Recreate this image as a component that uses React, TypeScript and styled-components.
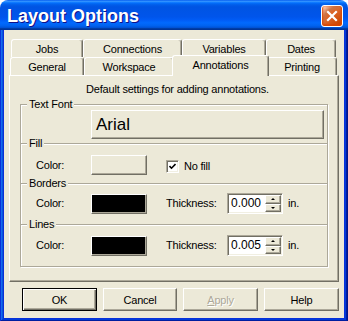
import styled, { createGlobalStyle, css } from "styled-components";

const GlobalStyle = createGlobalStyle`
  html, body {
    margin: 0;
    padding: 0;
    background: #ffffff;
  }
  body {
    font-family: "Liberation Sans", Arial, sans-serif;
    font-size: 11px;
    letter-spacing: -0.2px;
    color: #000;
  }
`;

const Window = styled.div`
  width: 348px;
  height: 321px;
  display: flex;
  flex-direction: column;
  border-radius: 8px 8px 0 0;
  overflow: hidden;
`;

const TitleBar = styled.div`
  height: 30px;
  flex-shrink: 0;
  display: flex;
  align-items: flex-start;
  justify-content: space-between;
  background: linear-gradient(
    180deg,
    #0058ee 0%,
    #3593ff 4%,
    #288eff 6%,
    #127dff 8%,
    #036ffc 10%,
    #0262ee 14%,
    #0057e5 20%,
    #0054e3 24%,
    #0055eb 56%,
    #005bf5 66%,
    #026afe 76%,
    #0062ef 86%,
    #0052d6 92%,
    #0040ab 94%,
    #003092 100%
  );
`;

const TitleText = styled.span`
  padding: 6px 0 0 7px;
  font-family: "Liberation Sans", Arial, sans-serif;
  font-size: 18px;
  font-weight: 700;
  letter-spacing: 0;
  line-height: 20px;
  color: #fff;
  text-shadow: 1px 1px #0f1089;
`;

const CloseButton = styled.div`
  width: 22px;
  height: 22px;
  margin: 5px 5px 0 0;
  box-sizing: border-box;
  border: 1px solid #fff;
  border-radius: 3px;
  display: flex;
  align-items: center;
  justify-content: center;
  background: radial-gradient(
    circle at 90% 90%,
    #cc4600 0%,
    #dc6527 55%,
    #cd7546 70%,
    #ffccb2 90%,
    #fff 100%
  );
  box-shadow: inset 0 -1px 2px 1px #da4600;
`;

const Frame = styled.div`
  flex: 1;
  display: flex;
  padding: 0 4px 4px;
  background: #0831d9;
  box-shadow: inset -1px -1px #00138c, inset 1px 0 #0831d9,
    inset -2px -2px #001ea0, inset 2px 0 #166aee, inset -3px -3px #003bda,
    inset 3px 0 #0855dd;
`;

const Body = styled.div`
  flex: 1;
  display: flex;
  flex-direction: column;
  background: #ece9d8;
  padding: 9px 5px 7px;
`;

const TabRow = styled.div<{ $indent: number }>`
  display: flex;
  align-items: flex-end;
  height: 18px;
  padding-left: ${(p) => p.$indent}px;
`;

const Tab = styled.div<{ $w: number; $active?: boolean }>`
  width: ${(p) => p.$w}px;
  height: 18px;
  box-sizing: border-box;
  flex-shrink: 0;
  display: flex;
  align-items: center;
  justify-content: center;
  background: #ece9d8;
  border: 1px solid;
  border-bottom: none;
  border-color: #fff #716f64 transparent #fff;
  border-radius: 3px 3px 0 0;
  box-shadow: inset -1px 0 #aca899;
  white-space: nowrap;

  ${(p) =>
    p.$active &&
    css`
      width: ${p.$w + 4}px;
      height: 21px;
      margin: 0 -2px -1px;
      position: relative;
      z-index: 1;
      padding-bottom: 2px;
    `}
`;

const Panel = styled.div`
  height: 207px;
  box-sizing: border-box;
  border: 1px solid;
  border-color: #fff #716f64 #716f64 #fff;
  box-shadow: inset -1px -1px #aca899;
  padding: 7px 10px 0;
`;

const Description = styled.div`
  line-height: 13px;
  text-align: center;
  padding-left: 7px;
`;

const Groups = styled.div`
  margin-top: 8px;
  border: 1px solid #aca899;
  border-top: none;
  box-shadow: 1px 1px #fff, inset 1px 0 #fff;
`;

const Section = styled.div<{ $pt: number; $pb: number }>`
  position: relative;
  border-top: 1px solid #aca899;
  box-shadow: inset 0 1px #fff;
  padding: ${(p) => p.$pt}px 0 ${(p) => p.$pb}px;
`;

const Legend = styled.span`
  position: absolute;
  top: -7px;
  left: 6px;
  padding: 0 2px;
  line-height: 13px;
  background: #ece9d8;
`;

const Row = styled.div<{ $indent?: number }>`
  display: flex;
  align-items: center;
  padding-left: ${(p) => p.$indent ?? 15}px;
  line-height: 13px;
`;

const Label = styled.span<{ $w: number }>`
  width: ${(p) => p.$w}px;
  flex-shrink: 0;
`;

const raised = css`
  border: 1px solid;
  border-color: #fff #716f64 #716f64 #fff;
  box-shadow: inset -1px -1px #aca899;
`;

const FontButton = styled.div`
  width: 233px;
  height: 29px;
  box-sizing: border-box;
  ${raised};
  background: #ece9d8;
  display: flex;
  align-items: center;
  padding-left: 4px;
  font-size: 17px;
  letter-spacing: 0;
`;

const Swatch = styled.div<{ $color: string }>`
  width: 56px;
  height: 20px;
  box-sizing: border-box;
  flex-shrink: 0;
  ${raised};
  background: ${(p) => p.$color};
`;

const CheckBox = styled.div`
  width: 13px;
  height: 13px;
  box-sizing: border-box;
  margin-left: 19px;
  margin-top: 2px;
  border: 1px solid;
  border-color: #aca899 #fff #fff #aca899;
  box-shadow: inset 1px 1px #716f64, inset -1px -1px #f1efe2;
  background: #fff;
  display: flex;
  align-items: center;
  justify-content: center;
`;

const CheckText = styled.span`
  margin-left: 5px;
  margin-top: 2px;
`;

const ThicknessLabel = styled.span`
  margin-left: 19px;
  width: 61px;
  flex-shrink: 0;
`;

const SpinBox = styled.div`
  width: 56px;
  height: 21px;
  box-sizing: border-box;
  flex-shrink: 0;
  display: flex;
  border: 1px solid;
  border-color: #aca899 #fff #fff #aca899;
  box-shadow: inset 1px 1px #716f64, inset -1px -1px #f1efe2;
  background: #fff;
  padding: 1px 1px 1px 3px;
`;

const SpinValue = styled.span`
  flex: 1;
  line-height: 17px;
  font-size: 12px;
  letter-spacing: 0;
`;

const SpinButtons = styled.div`
  width: 16px;
  display: flex;
  flex-direction: column;
`;

const SpinButton = styled.div`
  flex: 1;
  box-sizing: border-box;
  ${raised};
  background: #ece9d8;
  display: flex;
  align-items: center;
  justify-content: center;
`;

const Arrow = styled.span<{ $up?: boolean }>`
  width: 0;
  height: 0;
  border-left: 2px solid transparent;
  border-right: 2px solid transparent;
  ${(p) =>
    p.$up
      ? css`
          border-bottom: 2px solid #000;
        `
      : css`
          border-top: 2px solid #000;
        `}
`;

const Unit = styled.span`
  margin-left: 5px;
`;

const ButtonBar = styled.div`
  margin-top: 6px;
  display: flex;
  justify-content: flex-end;
  gap: 6px;
`;

const Button = styled.button<{ $w: number; $default?: boolean }>`
  width: ${(p) => p.$w}px;
  height: 23px;
  box-sizing: border-box;
  padding: 0;
  font-family: "Liberation Sans", Arial, sans-serif;
  font-size: 11px;
  letter-spacing: -0.2px;
  color: #000;
  background: #ece9d8;
  ${raised};

  &:disabled {
    color: #aca899;
    text-shadow: 1px 1px #fff;
  }

  ${(p) =>
    p.$default &&
    css`
      border: 1px solid #000;
      box-shadow: inset 1px 1px #fff, inset -1px -1px #716f64,
        inset -2px -2px #aca899;
    `}
`;

const Spin = ({ value }: { value: string }) => (
  <SpinBox>
    <SpinValue>{value}</SpinValue>
    <SpinButtons>
      <SpinButton>
        <Arrow $up />
      </SpinButton>
      <SpinButton>
        <Arrow />
      </SpinButton>
    </SpinButtons>
  </SpinBox>
);

const topTabs = [
  { label: "Jobs", w: 72 },
  { label: "Connections", w: 99 },
  { label: "Variables", w: 84 },
  { label: "Dates", w: 70 },
];

const frontTabs = [
  { label: "General", w: 74 },
  { label: "Workspace", w: 90 },
  { label: "Annotations", w: 93, active: true },
  { label: "Printing", w: 70 },
];

export default function App() {
  return (
    <>
      <GlobalStyle />
      <Window>
        <TitleBar>
          <TitleText>Layout Options</TitleText>
          <CloseButton>
            <svg width="12" height="12" viewBox="0 0 12 12">
              <path
                d="M2 2 L10 10 M10 2 L2 10"
                stroke="#fff"
                strokeWidth="2.2"
                strokeLinecap="square"
              />
            </svg>
          </CloseButton>
        </TitleBar>
        <Frame>
          <Body>
            <TabRow $indent={2}>
              {topTabs.map((t) => (
                <Tab key={t.label} $w={t.w}>
                  {t.label}
                </Tab>
              ))}
            </TabRow>
            <TabRow $indent={1}>
              {frontTabs.map((t) => (
                <Tab key={t.label} $w={t.w} $active={t.active}>
                  {t.label}
                </Tab>
              ))}
            </TabRow>
            <Panel>
              <Description>Default settings for adding annotations.</Description>
              <Groups>
                <Section $pt={5} $pb={4}>
                  <Legend>Text Font</Legend>
                  <Row $indent={70}>
                    <FontButton>Arial</FontButton>
                  </Row>
                </Section>
                <Section $pt={11} $pb={8}>
                  <Legend>Fill</Legend>
                  <Row>
                    <Label $w={55}>Color:</Label>
                    <Swatch $color="#ece9d8" />
                    <CheckBox>
                      <svg width="7" height="7" viewBox="0 0 7 7">
                        <path
                          d="M0.5 3 L2.5 5.2 L6.5 1"
                          stroke="#000"
                          strokeWidth="1.6"
                          fill="none"
                        />
                      </svg>
                    </CheckBox>
                    <CheckText>No fill</CheckText>
                  </Row>
                </Section>
                <Section $pt={9} $pb={10}>
                  <Legend>Borders</Legend>
                  <Row>
                    <Label $w={55}>Color:</Label>
                    <Swatch $color="#000" />
                    <ThicknessLabel>Thickness:</ThicknessLabel>
                    <Spin value="0.000" />
                    <Unit>in.</Unit>
                  </Row>
                </Section>
                <Section $pt={10} $pb={10}>
                  <Legend>Lines</Legend>
                  <Row>
                    <Label $w={55}>Color:</Label>
                    <Swatch $color="#000" />
                    <ThicknessLabel>Thickness:</ThicknessLabel>
                    <Spin value="0.005" />
                    <Unit>in.</Unit>
                  </Row>
                </Section>
              </Groups>
            </Panel>
            <ButtonBar>
              <Button $w={75} $default>
                OK
              </Button>
              <Button $w={74}>Cancel</Button>
              <Button $w={75} disabled>
                <u>A</u>pply
              </Button>
              <Button $w={75}>Help</Button>
            </ButtonBar>
          </Body>
        </Frame>
      </Window>
    </>
  );
}
